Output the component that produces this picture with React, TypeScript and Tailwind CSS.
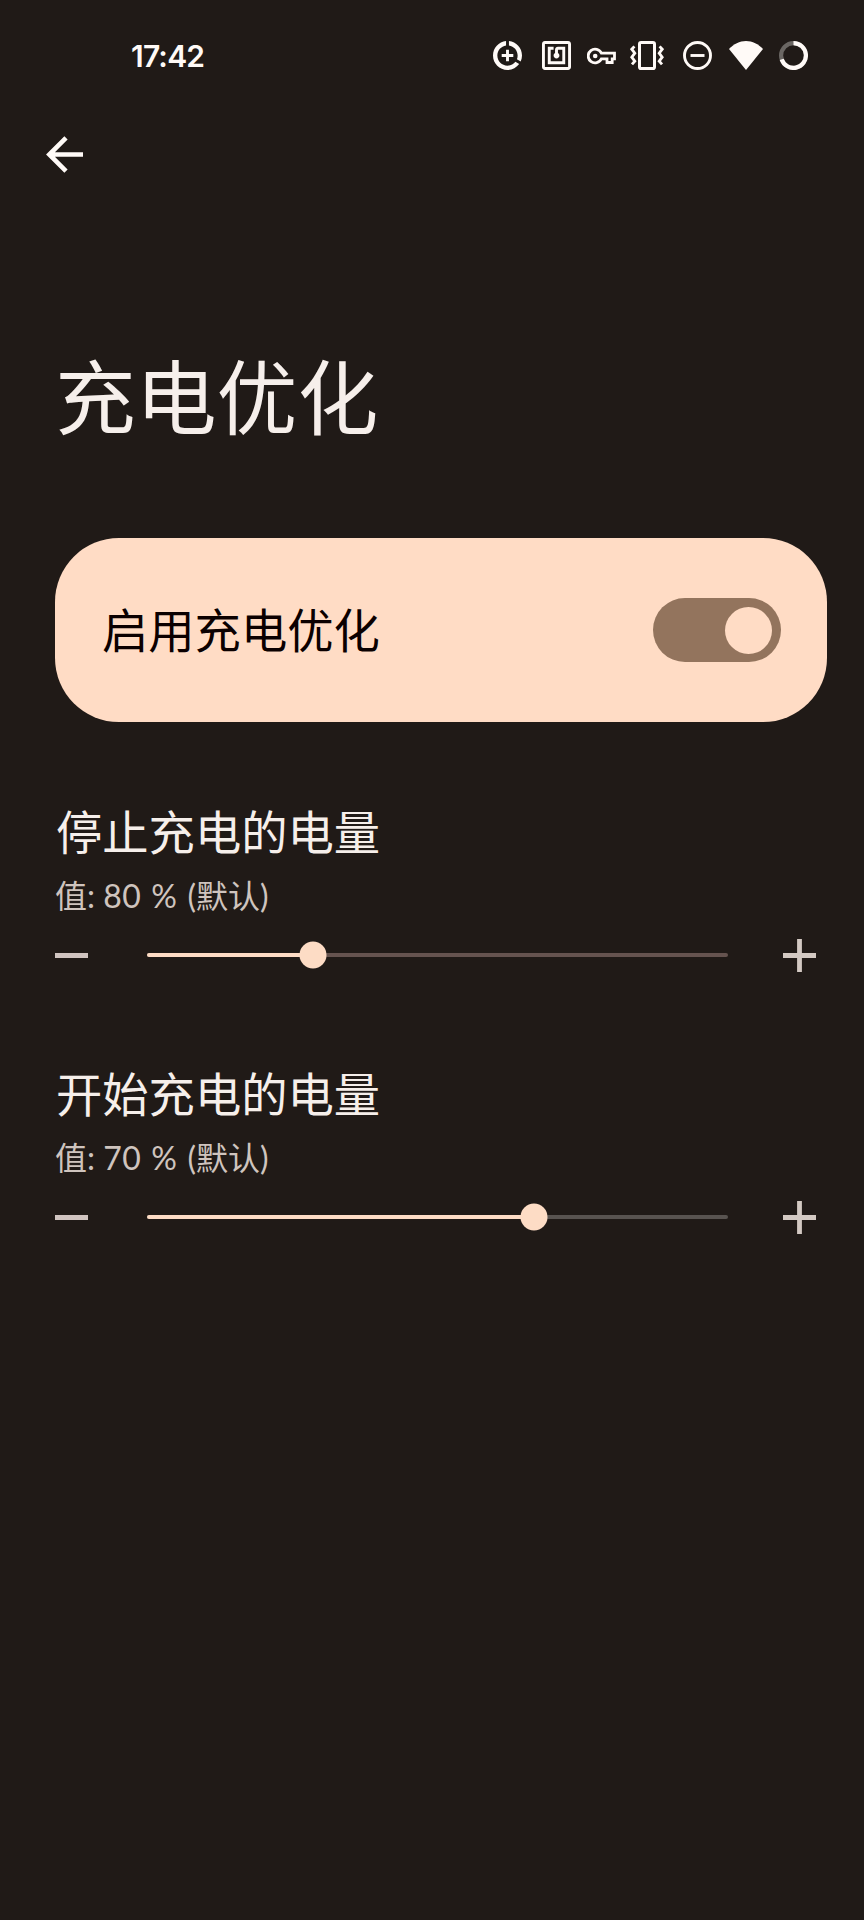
import React from "react";

const DataSaverIcon = () => (
  <svg viewBox="2 2 20 20" className="size-[29px]" fill="currentColor">
    <path d="M11 8v3H8v2h3v3h2v-3h3v-2h-3V8h-2zm2-5.95v3.03c3.39.49 6 3.39 6 6.92 0 .9-.18 1.75-.48 2.54l2.6 1.53c.56-1.24.88-2.62.88-4.07 0-5.18-3.95-9.45-9-9.95zM12 19c-3.87 0-7-3.13-7-7 0-3.53 2.61-6.43 6-6.92V2.05c-5.06.5-9 4.76-9 9.95 0 5.52 4.47 10 9.99 10 3.31 0 6.24-1.61 8.06-4.09l-2.6-1.53C16.17 17.98 14.21 19 12 19z" />
  </svg>
);

const NfcIcon = () => (
  <svg viewBox="2 2 20 20" className="ml-5 size-[29px]" fill="currentColor">
    <path d="M20 2H4c-1.1 0-2 .9-2 2v16c0 1.1.9 2 2 2h16c1.1 0 2-.9 2-2V4c0-1.1-.9-2-2-2zm0 18H4V4h16v16zM18 6h-5c-1.1 0-2 .9-2 2v2.28c-.6.35-1 .98-1 1.72 0 1.1.9 2 2 2s2-.9 2-2c0-.74-.4-1.38-1-1.72V8h3v8H8V8h2V6H6v12h12V6z" />
  </svg>
);

const KeyIcon = () => (
  <svg viewBox="0 0 29 18" className="ml-4 h-[18px] w-[29px]" fill="none" stroke="currentColor">
    <path
      strokeWidth="2.8"
      d="M14.4 6.2H27.5V11.8H25.2V15.5H20V11.8H14.4A6.9 6.9 0 1 1 14.4 6.2Z"
    />
    <circle cx="8.2" cy="9" r="2.3" fill="currentColor" stroke="none" />
  </svg>
);

const VibrateIcon = () => (
  <svg viewBox="0 0 34 29" className="ml-3.5 h-[29px] w-[34px]" fill="none" stroke="currentColor">
    <rect x="9.5" y="1.5" width="15" height="26" rx="1.6" strokeWidth="3" />
    <path
      strokeWidth="2.8"
      d="M4.4 5.4L1.8 8.2L4.8 12.2L1.8 16.2L4.8 20.2L2 23.4M29.6 5.4L32.2 8.2L29.2 12.2L32.2 16.2L29.2 20.2L32 23.4"
    />
  </svg>
);

const DndIcon = () => (
  <svg viewBox="0 0 29 29" className="ml-[19px] size-[29px]" fill="none" stroke="currentColor" strokeWidth="2.9">
    <circle cx="14.5" cy="14.5" r="13" />
    <path d="M7.5 14.5H21.5" />
  </svg>
);

const WifiIcon = () => (
  <svg viewBox="0 0 34 29" className="ml-[17px] h-[29px] w-[34px]" fill="currentColor">
    <path d="M17 29L0 8C4.6 3 10.6 0 17 0S29.4 3 34 8Z" />
  </svg>
);

const BatteryIcon = () => (
  <svg viewBox="0 0 29 29" className="ml-4 size-[29px]" fill="none" stroke="currentColor" strokeWidth="4.2">
    <circle cx="14.5" cy="14.5" r="12.4" className="text-[#6a6663]" />
    <path d="M14.5 2.1A12.4 12.4 0 1 1 2.7 18.3" />
  </svg>
);

type SliderSettingProps = {
  title: string;
  value: number;
  progress: number;
  trackClass: string;
};

const SliderSetting = ({ title, value, progress, trackClass }: SliderSettingProps) => (
  <section className="h-[262px]">
    <h2 className="h-16 pl-px text-[46.3px] leading-[64px] whitespace-nowrap text-[#f6efeb]">{title}</h2>
    <p className="mt-2 h-12 text-[32px] leading-[48px] whitespace-pre text-[#cfc4be]">
      值: <span className="tracking-[0.6px] [word-spacing:1px]">{value} % </span>(默认)
    </p>
    <div className="mt-[18px] flex h-[34px] items-center">
      <span className="h-[5px] w-[33px] bg-[#d0c4c0]" />
      <div className={"relative ml-[59px] h-1 w-[581px] rounded-full " + trackClass}>
        <div className="h-1 rounded-full bg-[#fddcc5]" style={{ width: `${progress}%` }} />
        <div
          className="absolute top-1/2 size-[27px] -translate-x-1/2 -translate-y-1/2 rounded-full bg-[#fddcc5]"
          style={{ left: `${progress}%` }}
        />
      </div>
      <svg viewBox="0 0 33 33" className="ml-[55px] size-[33px]" fill="none" stroke="#d3c9c3" strokeWidth="4.8">
        <path d="M0 16.5H33M16.5 0V33" />
      </svg>
    </div>
  </section>
);

const App = () => {
  return (
    <main className="h-[1920px] w-[864px] overflow-hidden bg-[#201a17] font-['Lato','Noto_Sans_CJK_SC',sans-serif] text-[#fffaf7]">
      <header className="flex h-[111px] items-center pl-[131px]">
        <span className="w-[362px] font-['Inter',sans-serif] text-[30px] leading-9 font-semibold tracking-[-0.8px]">
          17:42
        </span>
        <DataSaverIcon />
        <NfcIcon />
        <KeyIcon />
        <VibrateIcon />
        <DndIcon />
        <WifiIcon />
        <BatteryIcon />
      </header>

      <button className="mt-[25px] ml-[46px] block">
        <svg viewBox="0 0 37 37" className="size-[37px]" fill="none" stroke="currentColor" strokeWidth="4.6">
          <path d="M37 18.5H4M20 1.8L3.3 18.5L20 35.2" />
        </svg>
      </button>

      <h1 className="mt-[164px] ml-[55px] h-[120px] text-[80.8px] leading-[120px] text-[#f6efeb]">充电优化</h1>

      <div className="mt-[81px] ml-[55px] flex h-[184px] w-[772px] items-center justify-between rounded-[64px] bg-[#ffdcc5] pr-[46px] pl-[47px]">
        <span className="text-[46.3px] leading-[64px] text-[#0b0000]">启用充电优化</span>
        <div className="flex h-16 w-32 items-center justify-end rounded-full bg-[#93745d] pr-[9px]">
          <span className="size-[47px] rounded-full bg-[#ffdcc5]" />
        </div>
      </div>

      <div className="mt-[78px] ml-[55px]">
        <SliderSetting title="停止充电的电量" value={80} progress={28.6} trackClass="bg-[#65534f]" />
        <SliderSetting title="开始充电的电量" value={70} progress={66.6} trackClass="bg-[#585350]" />
      </div>
    </main>
  );
};

export default App;
